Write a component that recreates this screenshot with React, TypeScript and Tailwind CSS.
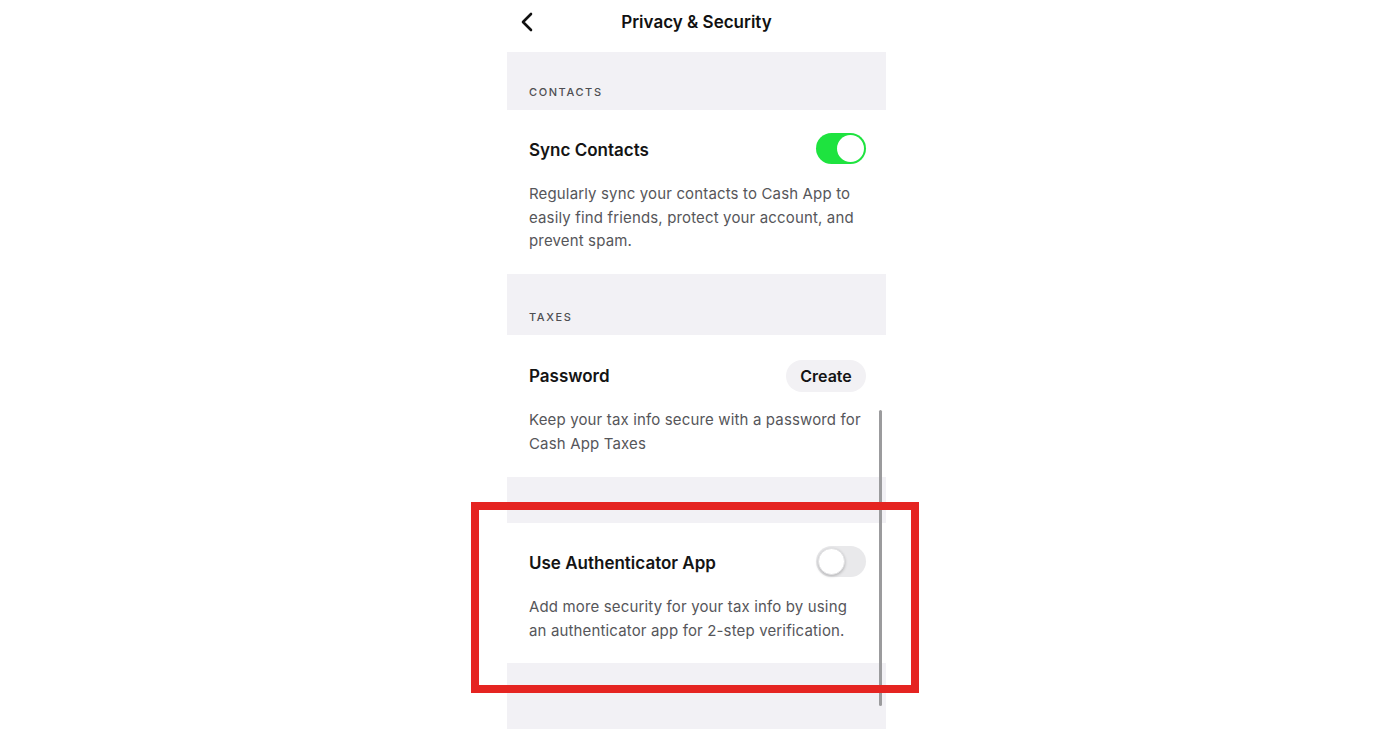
import React from "react";

const font = { fontFamily: "Inter, 'Noto Sans', sans-serif" };

function Toggle({ on }: { on: boolean }) {
  return on ? (
    <div className="w-[50px] h-[31px] rounded-full bg-[#1ee33f] flex items-center justify-end pr-[2px] shrink-0">
      <div className="w-[27px] h-[27px] rounded-full bg-white" />
    </div>
  ) : (
    <div className="w-[50px] h-[31px] rounded-full bg-[#e9e9eb] flex items-center justify-start pl-[2px] shrink-0">
      <div className="w-[27px] h-[27px] rounded-full bg-white shadow-[0_1px_3px_rgba(0,0,0,0.25)] border border-[#e2e2e4]" />
    </div>
  );
}

function SectionLabel({ text, h }: { text: string; h: string }) {
  return (
    <div className={`${h} bg-[#f2f1f5] flex items-end px-[22px] pb-[10px]`}>
      <span className="text-[11px] leading-[16px] font-medium tracking-[1.6px] text-[#4e4e52]">{text}</span>
    </div>
  );
}

export default function App() {
  return (
    <div className="relative w-[1396px] h-[729px] bg-white overflow-hidden" style={font}>
      <div className="ml-[507px] w-[379px] h-[729px] flex flex-col">
        {/* Header */}
        <div className="h-[52px] flex items-start pt-[10px]">
          <div className="w-[40px] pl-[13px] pt-[2px]">
            <svg width="14" height="20" viewBox="0 0 14 20" fill="none">
              <polyline points="11,2 3,10 11,18" stroke="#111" strokeWidth="2.6" strokeLinecap="round" strokeLinejoin="round" />
            </svg>
          </div>
          <div className="flex-1 text-center pr-[40px] text-[17px] leading-[24px] font-semibold text-[#111]">
            Privacy &amp; Security
          </div>
        </div>

        <SectionLabel text="CONTACTS" h="h-[58px]" />

        <div className="h-[164px] px-[22px] pt-[23px]">
          <div className="flex items-center justify-between h-[31px]">
            <span className="text-[17px] font-semibold text-[#141414] mt-[5px]">Sync Contacts</span>
            <div className="mr-[-2px]">
              <Toggle on />
            </div>
          </div>
          <p className="mt-[18px] text-[15px] leading-[23.5px] text-[#56565a] tracking-[0.15px]">
            Regularly sync your contacts to Cash App to easily find friends, protect your account, and prevent spam.
          </p>
        </div>

        <SectionLabel text="TAXES" h="h-[61px]" />

        <div className="h-[142px] px-[22px] pt-[25px]">
          <div className="flex items-center justify-between h-[32px]">
            <span className="text-[17px] font-semibold text-[#141414] mt-[1px]">Password</span>
            <div className="mr-[-2px] h-[32px] w-[80px] rounded-full bg-[#f2f1f4] flex items-center justify-center text-[16px] font-semibold text-[#141414]">
              Create
            </div>
          </div>
          <p className="mt-[16px] text-[15px] leading-[23.5px] text-[#56565a] tracking-[0.15px]">
            Keep your tax info secure with a password for Cash App Taxes
          </p>
        </div>

        <div className="h-[46px] bg-[#f2f1f5]" />

        <div className="h-[140px] px-[22px] pt-[23px]">
          <div className="flex items-center justify-between h-[31px]">
            <span className="text-[17px] font-semibold text-[#141414] mt-[5px]">Use Authenticator App</span>
            <div className="mr-[-2px]">
              <Toggle on={false} />
            </div>
          </div>
          <p className="mt-[18px] text-[15px] leading-[23.5px] text-[#56565a] tracking-[0.15px]">
            Add more security for your tax info by using an authenticator app for 2-step verification.
          </p>
        </div>

        <div className="flex-1 bg-[#f2f1f5]" />
      </div>

      {/* scroll indicator */}
      <div className="absolute left-[879px] top-[410px] w-[3px] h-[296px] rounded-full bg-[#9b9b9d]" />

      {/* annotation box */}
      <div className="absolute left-[471px] top-[502px] w-[448px] h-[191px] border-[8px] border-[#e52421]" />
    </div>
  );
}
